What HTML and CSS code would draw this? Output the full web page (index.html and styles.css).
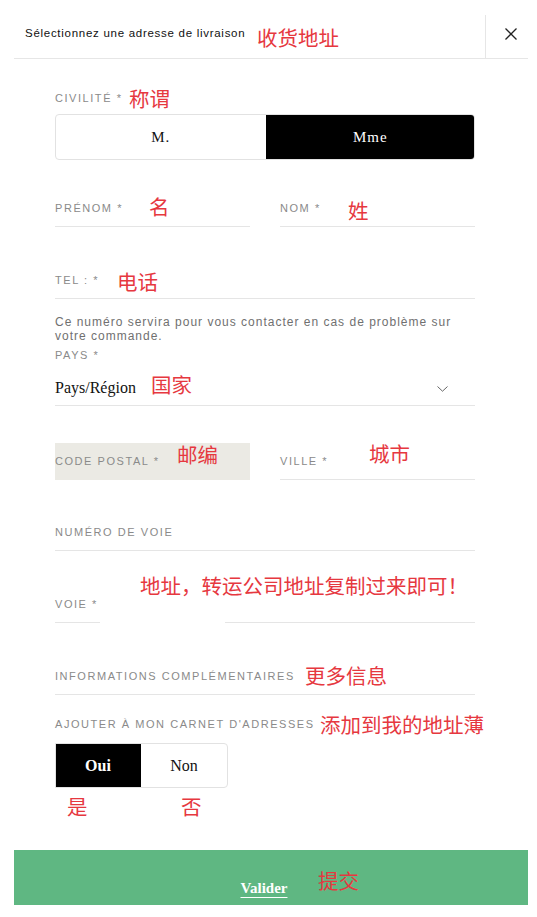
FILE: index.html
```html
<!DOCTYPE html>
<html lang="fr">
<head>
<meta charset="utf-8">
<title>Sélectionnez une adresse de livraison</title>
<link rel="stylesheet" href="styles.css">
</head>
<body>
<div class="page">
  <header class="hdr">
    <div class="title">Sélectionnez une adresse de livraison</div>
    <div class="close">
      <svg width="12" height="12" viewBox="0 0 12 12"><path d="M0.5 0.5 L11.5 11.5 M11.5 0.5 L0.5 11.5" stroke="#222" stroke-width="1.3" fill="none"/></svg>
    </div>
  </header>

  <form class="form">
    <div class="label civ-label">CIVILITÉ *</div>
    <div class="seg seg-civ">
      <span class="opt">M.</span>
      <span class="opt on">Mme</span>
    </div>

    <div class="row names">
      <div class="field"><span class="flabel">PRÉNOM *</span></div>
      <div class="field"><span class="flabel">NOM *</span></div>
    </div>

    <div class="field tel"><span class="flabel">TEL : *</span></div>

    <p class="help">Ce numéro servira pour vous contacter en cas de problème sur votre commande.</p>

    <div class="label pays-label">PAYS *</div>
    <div class="select">
      <span class="sel-text">Pays/Région</span>
      <svg class="chev" width="11" height="6" viewBox="0 0 11 6"><path d="M0.5 0.5 L5.5 5.2 L10.5 0.5" stroke="#666" stroke-width="1" fill="none"/></svg>
    </div>

    <div class="row cp">
      <div class="field filled"><span class="flabel">CODE POSTAL *</span></div>
      <div class="field"><span class="flabel">VILLE *</span></div>
    </div>

    <div class="field numero"><span class="flabel">NUMÉRO DE VOIE</span></div>
    <div class="field voie"><span class="flabel">VOIE *</span></div>
    <div class="field infos"><span class="flabel">INFORMATIONS COMPLÉMENTAIRES</span></div>

    <div class="label carnet-label">AJOUTER À MON CARNET D'ADRESSES</div>
    <div class="seg seg-yn">
      <span class="opt on">Oui</span>
      <span class="opt">Non</span>
    </div>
  </form>

  <div class="submit"><span class="submit-text">Valider</span></div>

  <div class="mask"></div>

  <span class="note n-title">收货地址</span>
  <span class="note n-civ">称谓</span>
  <span class="note n-prenom">名</span>
  <span class="note n-nom">姓</span>
  <span class="note n-tel">电话</span>
  <span class="note n-pays">国家</span>
  <span class="note n-cp">邮编</span>
  <span class="note n-ville">城市</span>
  <span class="note n-voie">地址，转运公司地址复制过来即可！</span>
  <span class="note n-infos">更多信息</span>
  <span class="note n-carnet">添加到我的地址薄</span>
  <span class="note n-oui">是</span>
  <span class="note n-non">否</span>
  <span class="note n-submit">提交</span>
</div>
</body>
</html>
```

FILE: styles.css
```css
* { box-sizing: border-box; }

html, body {
  margin: 0;
  padding: 0;
  background: #fff;
}

body {
  font-family: "Liberation Sans", Arial, sans-serif;
  color: #222;
}

.page {
  position: relative;
  width: 537px;
  height: 917px;
  overflow: hidden;
}

/* Header */
.hdr {
  display: flex;
  justify-content: space-between;
  align-items: flex-start;
  height: 59px;
  margin: 0 9px 0 14px;
  border-bottom: 1px solid #e6e6e6;
}

.title {
  margin-top: 26px;
  padding-left: 11px;
  font-size: 11.5px;
  line-height: 14px;
  letter-spacing: 0.72px;
  color: #111;
  white-space: nowrap;
}

.close {
  margin-top: 15px;
  width: 43px;
  height: 43px;
  border-left: 1px solid #e6e6e6;
  padding: 13px 0 0 19px;
}

.close svg { display: block; }

/* Form */
.form {
  margin: 0;
  padding: 0 62px 0 55px;
}

.label,
.flabel {
  display: block;
  font-size: 11px;
  line-height: 14px;
  letter-spacing: 1.55px;
  color: #8a8a8a;
  text-transform: uppercase;
  white-space: nowrap;
}

.civ-label { margin-top: 32px; }

.seg {
  display: flex;
  border: 1px solid #e2e2e2;
  border-radius: 4px;
  overflow: hidden;
  font-family: "Liberation Serif", "Times New Roman", serif;
}

.seg .opt {
  flex: 1 1 0;
  display: flex;
  align-items: center;
  justify-content: center;
  color: #111;
}

.seg .opt.on {
  background: #000;
  color: #fff;
}

.seg-civ {
  margin-top: 9px;
  height: 46px;
  font-size: 15px;
  letter-spacing: 1px;
}

.seg-civ .opt.on { margin: -1px -1px -1px 0; border-radius: 0 4px 4px 0; }

.seg-yn {
  margin-top: 12px;
  width: 173px;
  height: 45px;
  font-size: 16px;
  border-radius: 0 4px 4px 0;
}

.seg-yn .opt.on {
  margin: -1px 0 -1px -1px;
  border-radius: 0;
  font-weight: bold;
}

.row {
  display: grid;
  grid-template-columns: 1fr 1fr;
  column-gap: 30px;
}

.field {
  padding: 11px 0 11px;
  border-bottom: 1px solid #e5e5e5;
}

.field.filled {
  background: #ebeae4;
  border-bottom-color: #ebeae4;
}

.names { margin-top: 30px; }
.tel { margin-top: 35px; }

.help {
  margin: 16px 0 0;
  padding-right: 6px;
  font-size: 12px;
  line-height: 14px;
  letter-spacing: 1px;
  color: #707070;
}

.pays-label { margin-top: 5px; }

.select {
  display: flex;
  align-items: center;
  justify-content: space-between;
  padding: 17px 27px 8px 0;
  border-bottom: 1px solid #e5e5e5;
}

.sel-text {
  font-family: "Liberation Serif", "Times New Roman", serif;
  font-size: 16px;
  line-height: 18px;
  color: #111;
}

.chev { display: block; margin-top: 1px; }

.cp { margin-top: 37px; }
.numero { margin-top: 34px; }
.voie { margin-top: 35px; }
.infos { margin-top: 35px; }
.carnet-label { margin-top: 22px; }

/* Submit */
.submit {
  margin: 62px 9px 0 14px;
  height: 55px;
  background: #5fb782;
  display: flex;
  justify-content: center;
  padding: 28px 14px 0 0;
}

.submit-text {
  font-family: "Liberation Serif", "Times New Roman", serif;
  font-weight: bold;
  font-size: 15px;
  line-height: 20px;
  color: #fff;
  text-decoration: underline;
  text-underline-offset: 4px;
  text-decoration-thickness: 1px;
}

/* Overlays */
.mask {
  position: absolute;
  left: 100px;
  top: 619px;
  width: 125px;
  height: 6px;
  background: #fff;
}

.note {
  position: absolute;
  font-family: "Noto Sans CJK SC", sans-serif;
  font-size: 20.5px;
  line-height: 20px;
  color: #e6383f;
  white-space: nowrap;
}

.n-title  { left: 257px; top: 27px; }
.n-civ    { left: 129px; top: 88px; }
.n-prenom { left: 149px; top: 196px; }
.n-nom    { left: 348px; top: 200px; }
.n-tel    { left: 117px; top: 271px; }
.n-pays   { left: 151px; top: 374px; }
.n-cp     { left: 177px; top: 444px; }
.n-ville  { left: 369px; top: 443px; }
.n-voie   { left: 140px; top: 575px; }
.n-infos  { left: 305px; top: 665px; }
.n-carnet { left: 320px; top: 714px; }
.n-oui    { left: 67px; top: 796px; }
.n-non    { left: 181px; top: 796px; }
.n-submit { left: 318px; top: 870px; }
```
